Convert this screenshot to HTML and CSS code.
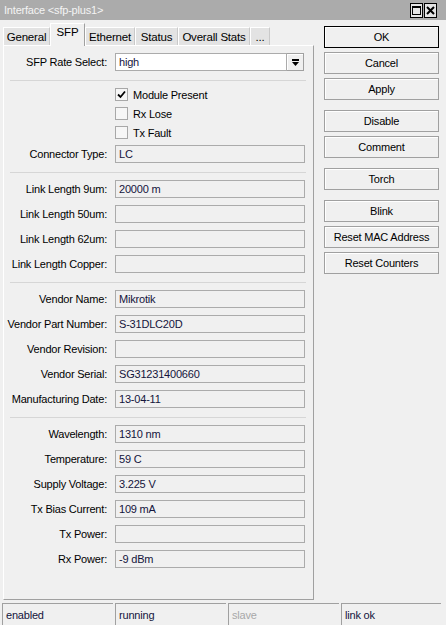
FILE: index.html
```html
<!DOCTYPE html>
<html lang="en">
<head>
    <meta charset="UTF-8">
    <title>Interface &lt;sfp-plus1&gt;</title>
    <link rel="stylesheet" href="styles.css">
</head>
<body>
<div class="window">

    <!-- title bar -->
    <div class="titlebar">
        <span class="title">Interface &lt;sfp-plus1&gt;</span>
        <div class="win-btns">
            <span class="win-btn">
                <svg width="11" height="13" viewBox="0 0 11 13"><rect x="1.5" y="2.5" width="8" height="8" fill="none" stroke="#000" stroke-width="1"/><rect x="1" y="2" width="9" height="2" fill="#000"/></svg>
            </span>
            <span class="win-btn">
                <svg width="11" height="13" viewBox="0 0 11 13"><path d="M2 3 L9 10 M9 3 L2 10" stroke="#000" stroke-width="2"/></svg>
            </span>
        </div>
    </div>

    <div class="main">
        <div class="left">
            <div class="tabs">
                <div class="tab w-general">General</div>
                <div class="tab active w-sfp">SFP</div>
                <div class="tab w-eth">Ethernet</div>
                <div class="tab w-status">Status</div>
                <div class="tab w-overall">Overall Stats</div>
                <div class="tab w-more">...</div>
            </div>

            <div class="panel">
                <div class="section">
                    <div class="row">
                        <span class="label">SFP Rate Select:</span>
                        <div class="select">
                            <div class="field edit">high</div>
                            <span class="drop">
                                <svg width="9" height="9" viewBox="0 0 9 9"><rect x="1" y="1" width="7" height="2" fill="#000"/><path d="M1 4 H8 L4.5 8 Z" fill="#000"/></svg>
                            </span>
                        </div>
                    </div>
                </div>
                <div class="sep"></div>

                <div class="section checks">
                    <div class="check-row">
                        <span class="box">
                            <svg width="11" height="11" viewBox="0 0 11 11"><path d="M2 5.5 L4.5 8 L9 2.5" fill="none" stroke="#000" stroke-width="1.8"/></svg>
                        </span>
                        <span>Module Present</span>
                    </div>
                    <div class="check-row"><span class="box"></span><span>Rx Lose</span></div>
                    <div class="check-row"><span class="box"></span><span>Tx Fault</span></div>
                    <div class="row"><span class="label">Connector Type:</span><div class="field">LC</div></div>
                </div>
                <div class="sep"></div>

                <div class="section">
                    <div class="row"><span class="label">Link Length 9um:</span><div class="field">20000 m</div></div>
                    <div class="row"><span class="label">Link Length 50um:</span><div class="field"></div></div>
                    <div class="row"><span class="label">Link Length 62um:</span><div class="field"></div></div>
                    <div class="row"><span class="label">Link Length Copper:</span><div class="field"></div></div>
                </div>
                <div class="sep"></div>

                <div class="section">
                    <div class="row"><span class="label">Vendor Name:</span><div class="field">Mikrotik</div></div>
                    <div class="row"><span class="label">Vendor Part Number:</span><div class="field">S-31DLC20D</div></div>
                    <div class="row"><span class="label">Vendor Revision:</span><div class="field"></div></div>
                    <div class="row"><span class="label">Vendor Serial:</span><div class="field">SG31231400660</div></div>
                    <div class="row"><span class="label">Manufacturing Date:</span><div class="field">13-04-11</div></div>
                </div>
                <div class="sep"></div>

                <div class="section">
                    <div class="row"><span class="label">Wavelength:</span><div class="field">1310 nm</div></div>
                    <div class="row"><span class="label">Temperature:</span><div class="field">59 C</div></div>
                    <div class="row"><span class="label">Supply Voltage:</span><div class="field">3.225 V</div></div>
                    <div class="row"><span class="label">Tx Bias Current:</span><div class="field">109 mA</div></div>
                    <div class="row"><span class="label">Tx Power:</span><div class="field"></div></div>
                    <div class="row"><span class="label">Rx Power:</span><div class="field">-9 dBm</div></div>
                </div>
            </div>
        </div>

        <!-- buttons on the right -->
        <div class="buttons">
            <div class="btn-group">
                <div class="btn default">OK</div>
                <div class="btn">Cancel</div>
                <div class="btn">Apply</div>
            </div>
            <div class="btn-group">
                <div class="btn">Disable</div>
                <div class="btn">Comment</div>
            </div>
            <div class="btn-group">
                <div class="btn">Torch</div>
            </div>
            <div class="btn-group">
                <div class="btn">Blink</div>
                <div class="btn">Reset MAC Address</div>
                <div class="btn">Reset Counters</div>
            </div>
        </div>
    </div>

    <div class="statusbar">
        <div class="cell c1">enabled</div>
        <div class="cell c2">running</div>
        <div class="cell c3 dim">slave</div>
        <div class="cell c4">link ok</div>
    </div>
</div>
</body>
</html>
```

FILE: styles.css
```css
* {
    margin: 0;
    padding: 0;
    box-sizing: border-box;
}

body {
    font-family: 'Liberation Sans', Arial, sans-serif;
    font-size: 11px;
    letter-spacing: -0.2px;
    background-color: #f0f0f0;
    color: #000;
}

.window {
    width: 446px;
    height: 625px;
    display: flex;
    flex-direction: column;
    overflow: hidden;
}

/* Title bar */
.titlebar {
    height: 20px;
    background-color: #ababab;
    display: flex;
    align-items: center;
    justify-content: space-between;
    padding: 0 9px 0 4px;
    color: #f4f4f4;
}

.win-btns {
    display: flex;
    gap: 1px;
    margin-top: 1px;
}

.win-btn {
    width: 13px;
    height: 15px;
    border: 1px solid #000;
    background-color: #e4e4e4;
    display: flex;
    align-items: center;
    justify-content: center;
}

/* Main area */
.main {
    height: 583px;
    display: flex;
    padding-left: 3px;
}

.left {
    width: 311px;
    display: flex;
    flex-direction: column;
}

/* Tabs */
.tabs {
    height: 22px;
    margin-top: 3px;
    display: flex;
    align-items: flex-end;
}

.tab {
    height: 18px;
    background-color: #e3e3e3;
    border-top: 1px solid #fff;
    border-left: 1px solid #fff;
    border-right: 1px solid #c9c9c9;
    display: flex;
    align-items: center;
    justify-content: center;
    font-size: 11.5px;
}

.tab.active {
    height: 23px;
    margin-bottom: -1px;
    background-color: #f0f0f0;
    border-right-color: #a0a0a0;
    align-items: flex-start;
    padding-top: 2px;
    position: relative;
    z-index: 1;
}

.w-general { width: 47px; }
.w-sfp { width: 35px; }
.w-eth { width: 50px; }
.w-status { width: 43px; }
.w-overall { width: 72px; }
.w-more { width: 20px; }

/* Panel */
.panel {
    height: 555px;
    border-top: 1px solid #fff;
    border-left: 1px solid #fff;
    border-right: 1px solid #a0a0a0;
    border-bottom: 1px solid #a0a0a0;
    padding-top: 7px;
    display: flex;
    flex-direction: column;
}

.section {
    display: flex;
    flex-direction: column;
    gap: 7px;
}

.section.checks {
    gap: 6px;
}

.sep {
    border-top: 1px solid #d6d6d6;
    margin: 9px 7px 7px 6px;
}

.row {
    height: 18px;
    display: flex;
    align-items: center;
}

.label {
    width: 104px;
    text-align: right;
    padding-right: 1px;
    margin-right: 7px;
    white-space: nowrap;
}

.field {
    width: 190px;
    height: 18px;
    border: 1px solid #ababab;
    background-color: #f0f0f0;
    padding-left: 3px;
    display: flex;
    align-items: center;
    color: #14143c;
}

.select {
    display: flex;
}

.field.edit {
    width: 172px;
    background-color: #fff;
}

.drop {
    width: 17px;
    height: 18px;
    border: 1px solid #a0a0a0;
    border-left: none;
    background-color: #f0f0f0;
    box-shadow: inset 1px 1px #fff;
    display: flex;
    align-items: center;
    justify-content: center;
}

/* Checkboxes */
.check-row {
    height: 13px;
    display: flex;
    align-items: center;
    padding-left: 111px;
}

.box {
    width: 13px;
    height: 13px;
    border: 1px solid #a8a8a8;
    background-color: #f6f6f6;
    margin-right: 5px;
    display: flex;
    align-items: center;
    justify-content: center;
}

/* Buttons */
.buttons {
    width: 115px;
    margin-left: 10px;
    padding-top: 6px;
    display: flex;
    flex-direction: column;
    gap: 10px;
}

.btn-group {
    display: flex;
    flex-direction: column;
    gap: 4px;
}

.btn {
    height: 22px;
    border: 1px solid #a0a0a0;
    box-shadow: inset 1px 1px #fff;
    background-color: #f0f0f0;
    display: flex;
    align-items: center;
    justify-content: center;
}

.btn.default {
    border-color: #000;
}

/* Status bar */
.statusbar {
    height: 22px;
    display: flex;
    gap: 2px;
    padding-left: 2px;
}

.cell {
    border-top: 1px solid #a0a0a0;
    border-left: 1px solid #a0a0a0;
    padding-left: 3px;
    display: flex;
    align-items: center;
    color: #14143c;
}

.c1, .c2, .c3 { width: 111px; }
.c4 { width: 100px; }

.cell.dim {
    color: #a8a8a8;
}
```
